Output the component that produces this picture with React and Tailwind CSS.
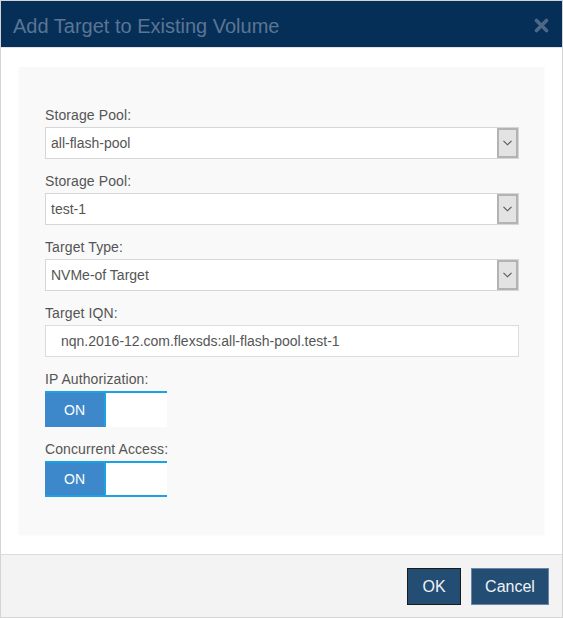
import { useState } from "react";

const Chevron = () => (
  <svg width="9" height="6" viewBox="0 0 9 6" fill="none">
    <path d="M0.5 0.8 L4.5 4.8 L8.5 0.8" stroke="#555" strokeWidth="1.1" />
  </svg>
);

const SelectBox = ({ value }) => (
  <div className="flex h-[32px] w-[474px] items-stretch border border-[#d6d6d6] bg-white">
    <div className="flex flex-1 items-center pl-[5px] text-[14px] text-[#555]">{value}</div>
    <div className="flex w-[21px] items-center justify-center border-2 border-[#b3b3b3] bg-[#e3e3e3]">
      <Chevron />
    </div>
  </div>
);

const Toggle = ({ bottom }) => (
  <div
    className={
      bottom
        ? "flex h-[36px] w-[122px] border-t-2 border-b-2 border-[#1aa3e0]"
        : "flex h-[36px] w-[122px] border-t-2 border-[#1aa3e0]"
    }
  >
    <div className="flex w-[61px] items-center justify-center border-r-2 border-[#1aa3e0] bg-[#3d88ca] text-[14px] text-white">
      ON
    </div>
    <div className="flex-1 bg-white" />
  </div>
);

const Field = ({ label, children }) => (
  <div className="flex flex-col">
    <label className="mb-[2px] text-[14px] leading-[20px] tracking-[0.1px] text-[#555]">{label}</label>
    {children}
  </div>
);

const App = () => {
  const [iqn] = useState("nqn.2016-12.com.flexsds:all-flash-pool.test-1");

  return (
    <div className="flex h-[618px] w-[563px] flex-col border border-[#d4d4d4] bg-white font-['Liberation_Sans',Arial,sans-serif]">
      <div className="flex h-[47px] items-center justify-between border-b border-[#e3e3e3] bg-[#062f58] pl-[12px] pr-[13px] pt-[3px]">
        <span className="text-[20px] text-[#5b7594]">Add Target to Existing Volume</span>
        <svg width="15" height="15" viewBox="0 0 15 15">
          <path d="M2.5 2.5 L12.5 12.5 M12.5 2.5 L2.5 12.5" stroke="#4d6787" strokeWidth="3.6" strokeLinecap="round" />
        </svg>
      </div>

      <div className="flex-1 px-[18px] pt-[19px]">
        <div className="flex h-[467px] flex-col gap-[12px] bg-[#f9f9f9] px-[26px] pt-[38px] shadow-[0_1px_2px_rgba(0,0,0,0.04)]">
          <Field label="Storage Pool:">
            <SelectBox value="all-flash-pool" />
          </Field>
          <Field label="Storage Pool:">
            <SelectBox value="test-1" />
          </Field>
          <Field label="Target Type:">
            <SelectBox value="NVMe-of Target" />
          </Field>
          <Field label="Target IQN:">
            <div className="flex h-[32px] w-[474px] items-center border border-[#dcdcdc] bg-white pl-[15px] text-[14px] text-[#555]">
              {iqn}
            </div>
          </Field>
          <Field label="IP Authorization:">
            <Toggle />
          </Field>
          <Field label="Concurrent Access:">
            <Toggle bottom />
          </Field>
        </div>
      </div>

      <div className="flex h-[63px] items-start justify-end gap-[10px] border-t border-[#dcdcdc] bg-[#f3f3f3] pr-[13px] pt-[13px]">
        <button className="h-[37px] w-[54px] border border-[#1b1b1b] bg-[#234d73] text-[16px] text-[#eef3f8]">
          OK
        </button>
        <button className="h-[37px] w-[78px] border border-[#6c84a8] bg-[#234d73] text-[16px] text-[#eef3f8]">
          Cancel
        </button>
      </div>
    </div>
  );
};

export default App;
